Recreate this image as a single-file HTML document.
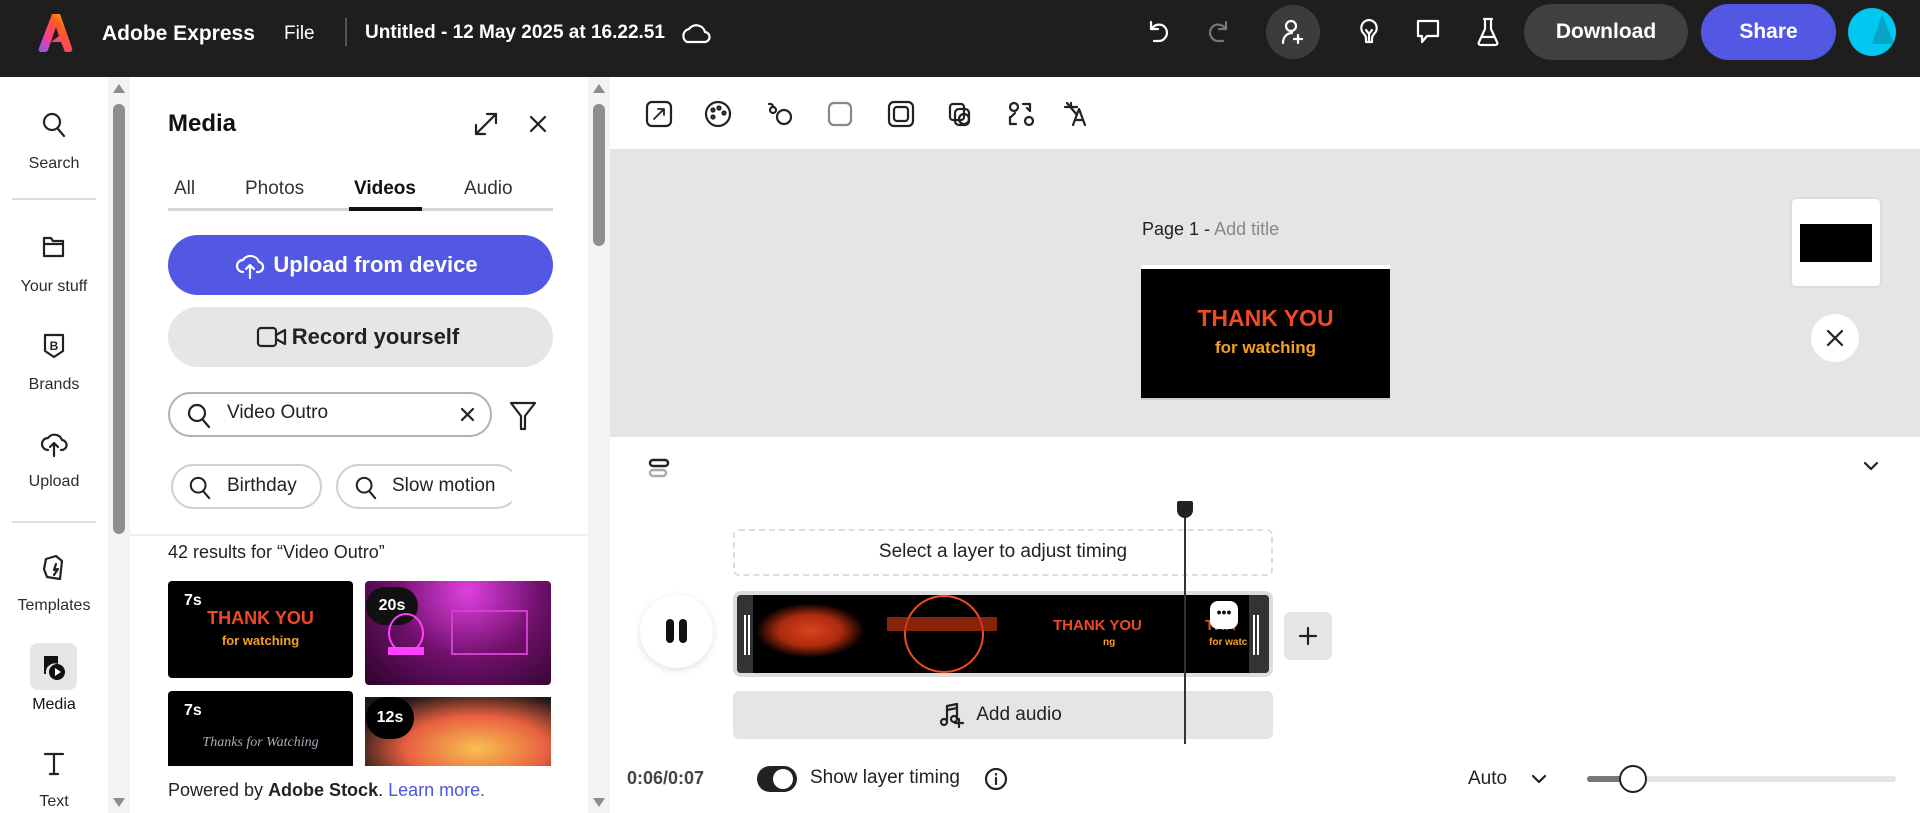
<!DOCTYPE html>
<html><head><meta charset="utf-8"><style>
*{box-sizing:border-box;margin:0;padding:0}
body{width:1920px;height:813px;overflow:hidden;background:#fff;font-family:"Liberation Sans",sans-serif;color:#222;position:relative}
.a{position:absolute}
.top{left:0;top:0;width:1920px;height:77px;background:#1e1e1e}
.w{color:#fff}
svg{display:block}
.rl{font-size:16px;color:#2c2c2c;text-align:center;width:108px;left:0}
.ic{fill:none;stroke:#222;stroke-width:2.2;stroke-linecap:round;stroke-linejoin:round}
.wi{fill:none;stroke:#fff;stroke-width:2.2;stroke-linecap:round;stroke-linejoin:round}
</style></head><body>
<div class="a top"></div>
<!-- logo -->
<svg class="a" style="left:38px;top:12px" width="36" height="40" viewBox="0 0 36 40"><defs><linearGradient id="g" x1="0" y1="1" x2="1" y2="0"><stop offset="0" stop-color="#7b5cff"/><stop offset=".35" stop-color="#ff3d8b"/><stop offset=".65" stop-color="#ff5a1f"/><stop offset="1" stop-color="#ffd400"/></linearGradient></defs><path d="M14 2h8l12 34c1 3-1 4-3 4h-4l-4-10h-10l8-6-3-9-8 23c-1 2-2 2-4 2H3c-2 0-3-2-2-4z" fill="url(#g)"/></svg>
<div class="a w" style="left:102px;top:22px;font-size:21px;font-weight:bold">Adobe Express</div>
<div class="a w" style="left:284px;top:23px;font-size:19px">File</div>
<div class="a" style="left:345px;top:18px;width:2px;height:28px;background:#555"></div>
<div class="a w" style="left:365px;top:22px;font-size:19px;font-weight:bold">Untitled - 12 May 2025 at 16.22.51</div>
<svg class="a" style="left:679px;top:18px" width="32" height="28" viewBox="0 0 32 28"><path class="wi" d="M8 24h17a5 5 0 0 0 1-10 9 9 0 0 0-16-3 7 7 0 0 0-2 13z"/></svg>
<svg class="a" style="left:1145px;top:18px" width="28" height="28" viewBox="0 0 28 28"><path class="wi" d="M6 4v7h7M6 11c3-4 7-5 11-4 4 2 5 5 5 8s-3 8-8 8H9"/></svg>
<svg class="a" style="left:1204px;top:18px" width="28" height="28" viewBox="0 0 28 28"><path fill="none" stroke="#777" stroke-width="2.2" stroke-linecap="round" d="M22 4v7h-7M22 11c-3-4-7-5-11-4-4 2-5 5-5 8s3 8 8 8h5"/></svg>
<div class="a" style="left:1266px;top:5px;width:54px;height:54px;border-radius:50%;background:#3c3c3c"></div>
<svg class="a" style="left:1279px;top:18px" width="28" height="28" viewBox="0 0 28 28"><circle class="wi" cx="12" cy="8" r="5"/><path class="wi" d="M4 25c0-6 4-10 9-10M19 17v8M15 21h8"/></svg>
<svg class="a" style="left:1356px;top:17px" width="26" height="30" viewBox="0 0 26 30"><path class="wi" d="M13 3a8 8 0 0 0-5 14c1 1 2 3 2 5v3h6v-3c0-2 1-4 2-5a8 8 0 0 0-5-14zM10 13l3 4 3-4M13 17v6"/></svg>
<svg class="a" style="left:1414px;top:18px" width="28" height="30" viewBox="0 0 28 30"><path class="wi" d="M4 3h20v15H13l-5 6v-6H4z"/></svg>
<svg class="a" style="left:1475px;top:16px" width="26" height="32" viewBox="0 0 26 32"><path class="wi" d="M9 3h8M10 3v10L4 26c-1 2 0 3 2 3h14c2 0 3-1 2-3l-6-13V3M7 21h12"/></svg>
<div class="a w" style="left:1524px;top:4px;width:164px;height:56px;border-radius:28px;background:#404040;font-size:21px;font-weight:bold;text-align:center;line-height:56px">Download</div>
<div class="a w" style="left:1701px;top:4px;width:135px;height:56px;border-radius:28px;background:#5258e4;font-size:21px;font-weight:bold;text-align:center;line-height:56px">Share</div>
<div class="a" style="left:1848px;top:8px;width:48px;height:48px;border-radius:50%;background:#00c8f0;overflow:hidden"><div style="position:absolute;left:24px;top:6px;width:0;height:0;border-left:10px solid transparent;border-right:12px solid transparent;border-bottom:30px solid #0aa3c8"></div></div>

<!-- left rail -->
<div class="a" style="left:108px;top:77px;width:22px;height:736px;background:#f3f3f3"></div>
<div class="a" style="left:113px;top:104px;width:12px;height:430px;border-radius:6px;background:#8e8e8e"></div>
<div class="a" style="left:113px;top:84px;width:0;height:0;border-left:6px solid transparent;border-right:6px solid transparent;border-bottom:9px solid #8e8e8e"></div>
<div class="a" style="left:113px;top:798px;width:0;height:0;border-left:6px solid transparent;border-right:6px solid transparent;border-top:9px solid #8e8e8e"></div>
<div class="a" style="left:588px;top:77px;width:22px;height:736px;background:#f3f3f3"></div>
<div class="a" style="left:593px;top:104px;width:12px;height:142px;border-radius:6px;background:#8e8e8e"></div>
<div class="a" style="left:593px;top:84px;width:0;height:0;border-left:6px solid transparent;border-right:6px solid transparent;border-bottom:9px solid #8e8e8e"></div>
<div class="a" style="left:593px;top:798px;width:0;height:0;border-left:6px solid transparent;border-right:6px solid transparent;border-top:9px solid #8e8e8e"></div>

<svg class="a" style="left:41px;top:111px" width="26" height="28" viewBox="0 0 26 28"><circle class="ic" cx="11" cy="11" r="8"/><path class="ic" d="M17 18l6 7"/></svg>
<div class="a rl" style="top:155px">Search</div>
<div class="a" style="left:12px;top:198px;width:84px;height:2px;background:#ddd"></div>
<svg class="a" style="left:41px;top:234px" width="26" height="26" viewBox="0 0 26 26"><path class="ic" d="M3 4h7l2 3h10v15H3zM3 10h19"/></svg>
<div class="a rl" style="top:278px">Your stuff</div>
<svg class="a" style="left:42px;top:332px" width="24" height="28" viewBox="0 0 24 28"><path class="ic" d="M3 3h18v16l-9 6-9-6z"/><text x="12" y="18" font-size="12" font-weight="bold" text-anchor="middle" fill="#222" font-family="Liberation Sans">B</text></svg>
<div class="a rl" style="top:376px">Brands</div>
<svg class="a" style="left:40px;top:430px" width="28" height="28" viewBox="0 0 28 28"><path class="ic" d="M8 20a6 6 0 0 1 0-12 8 8 0 0 1 14 2 5 5 0 0 1-1 10M14 26V13M10 17l4-4 4 4"/></svg>
<div class="a rl" style="top:473px">Upload</div>
<div class="a" style="left:12px;top:521px;width:84px;height:2px;background:#ddd"></div>
<svg class="a" style="left:40px;top:553px" width="28" height="30" viewBox="0 0 28 30"><path class="ic" d="M6 6l10-3 6 5-2 18-13-2-3-8z"/><path class="ic" d="M14 22l4-6-4 1 2-6"/></svg>
<div class="a rl" style="top:597px">Templates</div>
<div class="a" style="left:30px;top:643px;width:47px;height:47px;border-radius:8px;background:#e6e6e6"></div>
<svg class="a" style="left:40px;top:652px" width="28" height="30" viewBox="0 0 28 30"><path d="M4 4h14v8a9 9 0 0 0-12 10H4z" fill="#111"/><circle cx="17" cy="20" r="8" fill="#111"/><path d="M15 16l6 4-6 4z" fill="#fff"/></svg>
<div class="a rl" style="top:696px;color:#111">Media</div>
<svg class="a" style="left:42px;top:750px" width="24" height="28" viewBox="0 0 24 28"><path class="ic" d="M3 4h18M12 4v20M8 24h8"/></svg>
<div class="a rl" style="top:793px">Text</div>

<!-- panel -->
<div class="a" style="left:168px;top:110px;font-size:24px;font-weight:bold;color:#111">Media</div>
<svg class="a" style="left:472px;top:110px" width="28" height="28" viewBox="0 0 28 28"><path class="ic" d="M4 24L24 4M15 4h9v9M4 15v9h9"/></svg>
<svg class="a" style="left:528px;top:114px" width="20" height="20" viewBox="0 0 20 20"><path class="ic" d="M3 3l14 14M17 3L3 17"/></svg>
<div class="a" style="left:174px;top:178px;font-size:19px;color:#333">All</div>
<div class="a" style="left:245px;top:178px;font-size:19px;color:#333">Photos</div>
<div class="a" style="left:354px;top:178px;font-size:19px;font-weight:bold;color:#111">Videos</div>
<div class="a" style="left:464px;top:178px;font-size:19px;color:#333">Audio</div>
<div class="a" style="left:168px;top:208px;width:385px;height:3px;background:#d5d5d5"></div>
<div class="a" style="left:349px;top:207px;width:73px;height:4px;background:#111"></div>
<div class="a" style="left:168px;top:235px;width:385px;height:60px;border-radius:30px;background:#5258e4;color:#fff;font-size:22px;font-weight:bold;text-align:center;line-height:60px;padding-left:30px">Upload from device</div>
<svg class="a" style="left:234px;top:250px" width="32" height="30" viewBox="0 0 32 30"><path class="wi" d="M9 22a6 6 0 0 1 0-12 9 9 0 0 1 16 2 5 5 0 0 1-2 10M16 28V15M12 19l4-4 4 4"/></svg>
<div class="a" style="left:168px;top:307px;width:385px;height:60px;border-radius:30px;background:#e6e6e6;color:#222;font-size:22px;font-weight:bold;text-align:center;line-height:60px;padding-left:30px">Record yourself</div>
<svg class="a" style="left:256px;top:325px" width="32" height="24" viewBox="0 0 32 24"><rect class="ic" x="2" y="3" width="18" height="18" rx="3"/><path class="ic" d="M20 10l9-5v14l-9-5"/></svg>
<div class="a" style="left:168px;top:392px;width:324px;height:45px;border-radius:23px;border:2.5px solid #b3b3b3"></div>
<svg class="a" style="left:186px;top:402px" width="26" height="28" viewBox="0 0 26 28"><circle class="ic" cx="11" cy="11" r="8"/><path class="ic" d="M17 18l6 7"/></svg>
<div class="a" style="left:227px;top:402px;font-size:19px;color:#222">Video Outro</div>
<svg class="a" style="left:460px;top:407px" width="15" height="15" viewBox="0 0 15 15"><path class="ic" d="M2 2l11 11M13 2L2 13"/></svg>
<svg class="a" style="left:508px;top:400px" width="30" height="32" viewBox="0 0 30 32"><path class="ic" d="M3 3h24L17 16v13h-4V16z"/></svg>
<div class="a" style="left:171px;top:464px;width:151px;height:45px;border-radius:23px;border:2.5px solid #d0d0d0"></div>
<svg class="a" style="left:188px;top:475px" width="24" height="26" viewBox="0 0 26 28"><circle class="ic" cx="11" cy="11" r="8"/><path class="ic" d="M17 18l6 7"/></svg>
<div class="a" style="left:227px;top:475px;font-size:19px">Birthday</div>
<div class="a" style="left:336px;top:464px;width:183px;height:45px;border-radius:23px;border:2.5px solid #d0d0d0;border-right-color:transparent"></div>
<svg class="a" style="left:354px;top:475px" width="24" height="26" viewBox="0 0 26 28"><circle class="ic" cx="11" cy="11" r="8"/><path class="ic" d="M17 18l6 7"/></svg>
<div class="a" style="left:392px;top:475px;font-size:19px">Slow motion</div>
<div class="a" style="left:130px;top:534px;width:458px;height:2px;background:#f0f0f0"></div>
<div class="a" style="left:168px;top:542px;font-size:18px;color:#222">42 results for “Video Outro”</div>
<div class="a" style="left:168px;top:581px;width:185px;height:97px;border-radius:4px;background:#000"></div>
<div class="a w" style="left:184px;top:592px;font-size:16px;font-weight:bold">7s</div>
<div class="a" style="left:168px;top:608px;width:185px;text-align:center;font-size:18px;font-weight:bold;color:#f04a22">THANK YOU</div>
<div class="a" style="left:168px;top:633px;width:185px;text-align:center;font-size:13px;font-weight:bold;color:#f5a020">for watching</div>
<div class="a" style="left:365px;top:581px;width:186px;height:104px;border-radius:4px;background:radial-gradient(ellipse at 55% 10%,#e040e0,#70106c 50%,#2a0428)"></div>
<div class="a" style="left:366px;top:587px;width:52px;height:38px;border-radius:19px;background:#111;color:#fff;font-size:16px;font-weight:bold;text-align:center;line-height:38px">20s</div>
<div class="a" style="left:388px;top:613px;width:36px;height:40px;border-radius:50%;border:2px solid #ff40ff"></div>
<div class="a" style="left:451px;top:610px;width:77px;height:45px;border:2px solid #d040d0"></div>
<div class="a" style="left:388px;top:647px;width:36px;height:8px;background:#ff40ff"></div>
<div class="a" style="left:168px;top:691px;width:185px;height:75px;border-radius:4px 4px 0 0;background:#000"></div>
<div class="a w" style="left:184px;top:702px;font-size:16px;font-weight:bold">7s</div>
<div class="a" style="left:168px;top:735px;width:185px;text-align:center;font-size:14px;font-style:italic;color:#aab;font-family:'Liberation Serif',serif">Thanks for Watching</div>
<div class="a" style="left:365px;top:697px;width:186px;height:69px;background:radial-gradient(ellipse at 60% 75%,#f8c050,#e86040 45%,#201818 80%);"></div>
<div class="a" style="left:366px;top:697px;width:48px;height:42px;border-radius:21px;background:#000;color:#fff;font-size:16px;font-weight:bold;text-align:center;line-height:42px">12s</div>
<div class="a" style="left:168px;top:780px;font-size:18px;color:#222">Powered by <b>Adobe Stock</b>. <span style="color:#4b55e0">Learn more.</span></div>

<!-- right main -->
<div class="a" style="left:610px;top:149px;width:1310px;height:288px;background:#e5e5e5"></div>
<svg class="a" style="left:645px;top:99px" width="600" height="30" viewBox="0 0 600 30">
<g class="ic">
<rect x="2" y="3" width="24" height="24" rx="5"/><path d="M9 20l10-10M13 10h6v6" stroke-width="1.8"/>
<circle cx="73" cy="15" r="12"/><circle cx="68" cy="11" r="1.5"/><circle cx="74" cy="9" r="1.5"/><circle cx="79" cy="14" r="1.5"/><circle cx="68" cy="18" r="1.5"/>
<path d="M124 5a3 3 0 0 1 4 3"/><circle cx="139" cy="18" r="7"/><circle cx="128" cy="11" r="3"/>
<rect x="184" y="4" width="22" height="22" rx="5" stroke="#888"/>
<rect x="244" y="3" width="24" height="24" rx="5"/><rect x="249" y="8" width="14" height="14" rx="3"/>
<rect x="305" y="5" width="14" height="16" rx="3"/><rect x="310" y="10" width="14" height="16" rx="4"/><circle cx="319" cy="20" r="5"/>
<circle cx="369" cy="8" r="4"/><circle cx="384" cy="22" r="4"/><path d="M378 5h7v7M371 25h-6v-7M366 18l4-4M385 12l-3-3"/>
<path d="M422 4l10 12M420 8h12M426 4v3M428 26l6-16 6 16M430 21h8"/>
</g></svg>
<div class="a" style="left:1142px;top:219px;font-size:18px;color:#222">Page 1 - <span style="color:#888">Add title</span></div>
<div class="a" style="left:1141px;top:265px;width:249px;height:135px;background:#000;border-top:4px solid #fff;border-bottom:2px solid #ccc"></div>
<div class="a" style="left:1141px;top:305px;width:249px;text-align:center;font-size:23px;font-weight:bold;color:#f04a22">THANK YOU</div>
<div class="a" style="left:1141px;top:338px;width:249px;text-align:center;font-size:17px;font-weight:bold;color:#f5a020">for watching</div>
<div class="a" style="left:1790px;top:197px;width:92px;height:91px;border-radius:6px;background:#fff;border:2px solid #ddd"></div>
<div class="a" style="left:1800px;top:224px;width:72px;height:38px;background:#000"></div>
<div class="a" style="left:1811px;top:314px;width:48px;height:48px;border-radius:50%;background:#fff"></div>
<svg class="a" style="left:1826px;top:329px" width="18" height="18" viewBox="0 0 18 18"><path class="ic" d="M2 2l14 14M16 2L2 16"/></svg>

<!-- timeline -->
<svg class="a" style="left:648px;top:458px" width="22" height="20" viewBox="0 0 22 20"><rect x="2" y="2" width="18" height="6" rx="3" fill="none" stroke="#222" stroke-width="2.5"/><rect x="2" y="12" width="16" height="6" rx="3" fill="none" stroke="#aaa" stroke-width="2.5"/></svg>
<svg class="a" style="left:1863px;top:460px" width="16" height="12" viewBox="0 0 16 12"><path class="ic" d="M2 3l6 6 6-6"/></svg>
<div class="a" style="left:733px;top:529px;width:540px;height:47px;border:2.5px dashed #ddd;border-radius:6px;text-align:center;line-height:42px;font-size:19px">Select a layer to adjust timing</div>
<div class="a" style="left:640px;top:595px;width:73px;height:73px;border-radius:50%;background:#fff;box-shadow:0 2px 8px rgba(0,0,0,.12)"></div>
<div class="a" style="left:666px;top:619px;width:8px;height:24px;border-radius:4px;background:#111"></div>
<div class="a" style="left:679px;top:619px;width:8px;height:24px;border-radius:4px;background:#111"></div>
<div class="a" style="left:733px;top:591px;width:540px;height:86px;border-radius:8px;border:4px solid #ddd;background:#000;overflow:hidden">
 <div class="a" style="left:0;top:0;width:16px;height:78px;background:#333"></div>
 <div class="a" style="left:7px;top:20px;width:2px;height:40px;background:#fff"></div><div class="a" style="left:11px;top:20px;width:2px;height:40px;background:#fff"></div>
 <div class="a" style="left:18px;top:8px;width:110px;height:55px;background:radial-gradient(ellipse,#f04a22 0,#c03010 40%,transparent 70%);opacity:.9"></div>
 <div class="a" style="left:167px;top:0;width:80px;height:78px;border-radius:50%;border:2px solid #f04a22"></div>
 <div class="a" style="left:150px;top:22px;width:110px;height:14px;background:#c03010;opacity:.7"></div>
 <div class="a" style="left:316px;top:22px;font-size:15px;font-weight:bold;color:#f04a22">THANK YOU</div>
 <div class="a" style="left:366px;top:42px;font-size:10px;font-weight:bold;color:#f5a020">ng</div>
 <div class="a" style="left:468px;top:22px;font-size:15px;font-weight:bold;color:#f04a22">THA</div>
 <div class="a" style="left:472px;top:42px;font-size:10px;font-weight:bold;color:#f5a020">for watc</div>
 <div class="a" style="left:512px;top:0;width:20px;height:78px;background:#333"></div>
 <div class="a" style="left:516px;top:20px;width:2px;height:40px;background:#fff"></div><div class="a" style="left:520px;top:20px;width:2px;height:40px;background:#fff"></div>
 <div class="a" style="left:473px;top:6px;width:28px;height:28px;border-radius:8px;background:#fff;text-align:center;font-weight:bold;font-size:14px;line-height:22px;color:#111">•••</div>
</div>
<div class="a" style="left:1284px;top:612px;width:48px;height:48px;border-radius:6px;background:#e5e5e5"></div>
<svg class="a" style="left:1298px;top:626px" width="20" height="20" viewBox="0 0 20 20"><path class="ic" d="M10 2v16M2 10h16"/></svg>
<div class="a" style="left:733px;top:691px;width:540px;height:48px;border-radius:6px;background:#e5e5e5;text-align:center;line-height:48px;font-size:19px;padding-left:32px">Add audio</div>
<svg class="a" style="left:939px;top:701px" width="26" height="28" viewBox="0 0 26 28"><path class="ic" d="M8 20V5l10-2v14M8 9l10-2"/><circle class="ic" cx="5" cy="21" r="3"/><circle class="ic" cx="15" cy="18" r="3"/><path class="ic" d="M20 18v8M16 22h8"/></svg>
<div class="a" style="left:1184px;top:510px;width:2px;height:234px;background:#333"></div>
<div class="a" style="left:1177px;top:501px;width:16px;height:17px;border-radius:2px 2px 8px 8px;background:#222"></div>
<div class="a" style="left:627px;top:768px;font-size:18px;font-weight:bold;color:#444">0:06/0:07</div>
<div class="a" style="left:757px;top:766px;width:40px;height:26px;border-radius:13px;background:#222"></div>
<div class="a" style="left:773px;top:769px;width:20px;height:20px;border-radius:50%;background:#fff"></div>
<div class="a" style="left:810px;top:767px;font-size:19px;color:#222">Show layer timing</div>
<svg class="a" style="left:984px;top:767px" width="24" height="24" viewBox="0 0 24 24"><circle class="ic" cx="12" cy="12" r="10"/><path class="ic" d="M12 11v6M12 7v.5"/></svg>
<div class="a" style="left:1468px;top:768px;font-size:19px;color:#222">Auto</div>
<svg class="a" style="left:1531px;top:773px" width="16" height="12" viewBox="0 0 16 12"><path class="ic" d="M2 3l6 6 6-6"/></svg>
<div class="a" style="left:1587px;top:776px;width:309px;height:6px;border-radius:3px;background:#e5e5e5"></div>
<div class="a" style="left:1587px;top:776px;width:45px;height:6px;border-radius:3px;background:#777"></div>
<div class="a" style="left:1619px;top:765px;width:28px;height:28px;border-radius:50%;background:#fff;border:2.5px solid #222"></div>
</body></html>
